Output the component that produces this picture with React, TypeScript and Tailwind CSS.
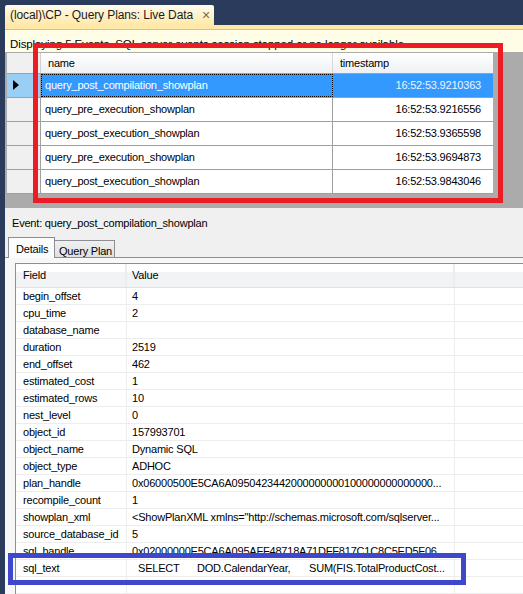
import React from "react";

const font = { fontFamily: '"Liberation Sans", Arial, sans-serif' };

const events = [
  ["query_post_compilation_showplan", "16:52:53.9210363"],
  ["query_pre_execution_showplan", "16:52:53.9216556"],
  ["query_post_execution_showplan", "16:52:53.9365598"],
  ["query_pre_execution_showplan", "16:52:53.9694873"],
  ["query_post_execution_showplan", "16:52:53.9843046"],
];

const fields: [string, React.ReactNode][] = [
  ["begin_offset", "4"],
  ["cpu_time", "2"],
  ["database_name", ""],
  ["duration", "2519"],
  ["end_offset", "462"],
  ["estimated_cost", "1"],
  ["estimated_rows", "10"],
  ["nest_level", "0"],
  ["object_id", "157993701"],
  ["object_name", "Dynamic SQL"],
  ["object_type", "ADHOC"],
  ["plan_handle", "0x06000500E5CA6A0950423442000000000100000000000000..."],
  ["recompile_count", "1"],
  ["showplan_xml", '<ShowPlanXML xmlns="http://schemas.microsoft.com/sqlserver...'],
  ["source_database_id", "5"],
  ["sql_handle", "0x02000000E5CA6A095AFF48718A71DFF817C1C8C5ED5F06..."],
  [
    "sql_text",
    <span className="flex">
      <span className="pl-[6px] w-[65px]">SELECT</span>
      <span className="w-[112px]">DOD.CalendarYear,</span>
      <span>SUM(FIS.TotalProductCost...</span>
    </span>,
  ],
  ["", ""],
];

export default function App() {
  return (
    <div
      className="relative w-[523px] h-[594px] overflow-hidden bg-[#2b3b5b] pl-[5px] flex flex-col text-[11px] tracking-[-0.2px] text-black"
      style={font}
    >
      {/* Title tab */}
      <div className="h-[25px] pt-[5px] flex">
        <div className="w-[209px] h-[20px] bg-gradient-to-b from-[#fffbf0] to-[#ffe9a8] rounded-t-[2px] flex items-center pl-[5px] text-[12px] tracking-[-0.1px] text-[#1b1b1b] whitespace-nowrap">
          <span>(local)\CP - Query Plans: Live Data</span>
          <span className="ml-[9px] text-[14px] text-[#7a6a48] leading-none">×</span>
        </div>
      </div>
      <div className="h-[4px] bg-[#ffe8a6]" />
      <div className="h-[1px] bg-[#c9c3a8]" />
      {/* Info bar */}
      <div className="h-[22px] bg-[#fffde6] pl-[5px] pt-[6px] text-[11.5px] tracking-[-0.1px] whitespace-nowrap">
        Displaying 5 Events. SQL server events session stopped or no longer available.
      </div>

      {/* Top grid */}
      <div className="h-[157px] bg-[#ababab] pl-[2px] pt-[1px]">
        <div className="w-[486px] bg-white flex flex-col">
          <div className="flex h-[21px] border-b border-[#a0a0a0] bg-gradient-to-b from-[#ffffff] to-[#eef0f3]">
            <div className="w-[34px] bg-[#f0f0f0] border-r border-[#d0d0d0]" />
            <div className="w-[292px] pl-[7px] flex items-center border-r border-[#d8d8d8]">name</div>
            <div className="flex-1 pl-[7px] flex items-center">timestamp</div>
          </div>
          {events.map(([n, t], i) => {
            const sel = i === 0;
            return (
              <div key={i} className="flex h-[24px] border-b border-[#a0a0a0]">
                <div
                  className={
                    "w-[34px] border-r border-[#a0a0a0] flex items-center pl-[6px] " +
                    (sel ? "bg-[#99cff5]" : "bg-[#f0f0f0]")
                  }
                >
                  {sel && (
                    <svg width="6" height="10" viewBox="0 0 6 10">
                      <path d="M0 0 L6 5 L0 10 Z" fill="#000" />
                    </svg>
                  )}
                </div>
                <div
                  className={
                    "w-[292px] flex items-center pl-[4px] border-r border-[#a0a0a0] " +
                    (sel ? "bg-[#3399ff] text-white outline-1 outline-dotted outline-black -outline-offset-1" : "")
                  }
                >
                  {n}
                </div>
                <div
                  className={
                    "flex-1 flex items-center justify-end pr-[12px] " + (sel ? "bg-[#3399ff] text-[#eaf4ff]" : "")
                  }
                >
                  {t}
                </div>
              </div>
            );
          })}
        </div>
      </div>

      {/* Lower panel */}
      <div className="flex-1 bg-[#f0f0f0] flex flex-col">
        <div className="h-[29px] pl-[7px] flex items-center pt-[1px]">Event: query_post_compilation_showplan</div>
        <div className="flex h-[20px] items-end pl-[3px] relative">
          <div className="w-[47px] h-[21px] bg-[#fcfcfc] border border-b-0 border-[#8c8e94] pl-[7px] pt-[3px] relative z-10 -mb-[1px]">
            Details
          </div>
          <div className="w-[60px] h-[17px] bg-gradient-to-b from-[#f0f0f0] to-[#e0e0e0] border border-l-0 border-b-0 border-[#8c8e94] pl-[4px] pt-[2px]">
            Query Plan
          </div>
        </div>
        <div className="flex-1 border-t border-[#8c8e94] bg-[#f7f7f7] pt-[5px] pl-[10px]">
          <div className="h-full border-t border-l border-[#8c8e94] bg-white">
            <div className="flex h-[24px] border-b border-[#e2e2e2] bg-[linear-gradient(#ffffff_0%,#ffffff_35%,#f2f3f5_36%,#f2f3f5_100%)]">
              <div className="w-[111px] pl-[7px] flex items-center border-r-2 border-[#ececec]">Field</div>
              <div className="w-[328px] pl-[5px] flex items-center border-r-2 border-[#ececec]">Value</div>
              <div className="flex-1" />
            </div>
            {fields.map(([f, v], i) => (
              <div key={i} className="flex h-[17px] border-b border-[#ededed]">
                <div className="w-[111px] pl-[7px] flex items-center border-r border-[#ededed] whitespace-nowrap">{f}</div>
                <div className="w-[328px] pl-[5px] flex items-center border-r border-[#ededed] whitespace-nowrap overflow-hidden">
                  {v}
                </div>
                <div className="flex-1" />
              </div>
            ))}
          </div>
        </div>
      </div>

      {/* Annotation boxes */}
      <div className="absolute left-[33px] top-[43px] w-[470px] h-[160px] border-[5px] border-[#ed1c24]" />
      <div className="absolute left-[8px] top-[553px] w-[458px] h-[32px] border-[5px] border-[#3f48cc]" />
    </div>
  );
}
